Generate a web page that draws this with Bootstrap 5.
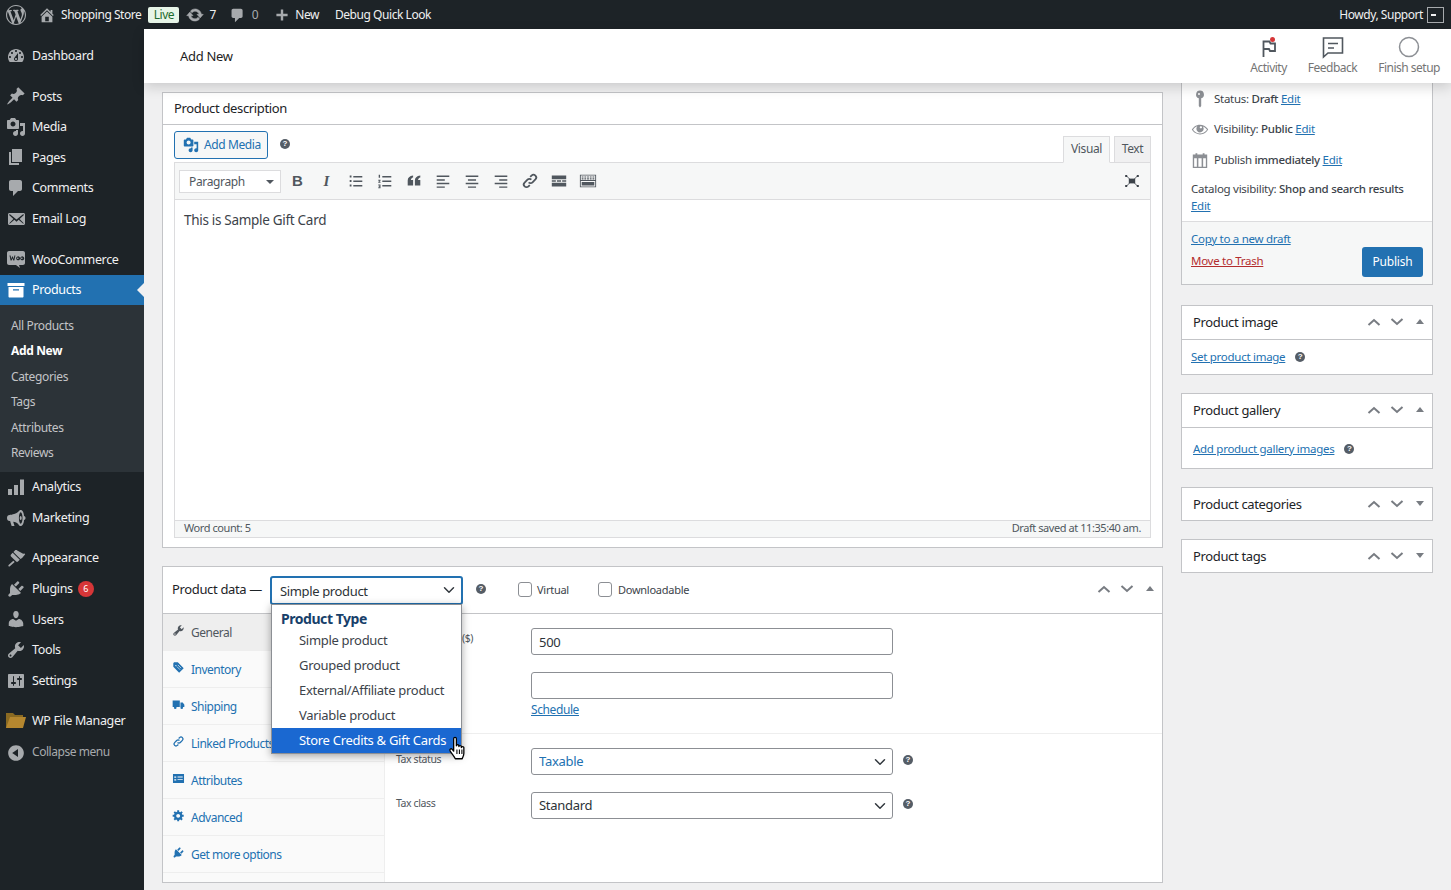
<!DOCTYPE html>
<html lang="en">
<head>
  <meta charset="UTF-8" />
  <meta name="viewport" content="width=device-width, initial-scale=1" />
  <title>Add New Product</title>
  <link href="https://cdn.jsdelivr.net/npm/bootstrap@5.3.3/dist/css/bootstrap.min.css" rel="stylesheet">
  <style>
    html, body { height: 890px; overflow: hidden; }
    body {
      background: #f0f0f1; color: #3c434a;
      font: 13px/1.4 "Noto Sans", sans-serif; letter-spacing: -.35px;
    }
    a { color: #2271b1; }
    svg { fill: currentColor; flex: none; display: block; }
    /* admin bar */
    .wp-bar { height: 29px; background: #1d2327; color: #f0f0f1; padding: 1px 7px 0 6px; white-space: nowrap; font-size: 12px; letter-spacing: -.45px; }
    .wp-bar .dim { color: #a7aaad; }
    .sp5 { margin-left: 5px; }
    .sp6 { margin-left: 6px; }
    .sp7 { margin-left: 7px; }
    .sp12 { margin-left: 12px; }
    .sp13 { margin-left: 13px; }
    .sp16 { margin-left: 16px; }
    .live-tag { background: #e7f5e8; color: #1d6b2c; border-radius: 2px; height: 16px; width: 31px; line-height: 15px; text-align: center; font-size: 12px; margin-top: -1px; }
    .avatar-box { width: 17px; height: 16px; border: 1px solid #a7aaad; background: #1d2327; padding: 6px 3px; margin-top: -1px; }
    .avatar-box i { display: block; height: 2px; width: 5px; background: #f0f0f1; }
    /* side menu */
    .page-wrap { height: 861px; }
    .side-menu { width: 144px; background: #1d2327; color: #f0f0f1; padding-top: 11.4px; font-size: 12.5px; }
    .menu-row { height: 30.6px; padding-left: 6px; gap: 6px; color: #f0f0f1; text-decoration: none; position: relative; }
    .menu-row svg { color: #a7aaad; }
    .menu-row.gap-top { margin-top: 10px; }
    .menu-row.current { background: #2271b1; color: #fff; }
    .menu-row.current svg { color: #fff; }
    .menu-row.current::after {
      content: ""; position: absolute; right: 0; top: 8px;
      border: 7.5px solid transparent; border-right-color: #f0f0f1; border-left: 0;
    }
    .sub-menu { background: #2c3338; padding: 7.5px 0 6.1px 11px; }
    .sub-menu a { display: block; height: 25.5px; line-height: 25.5px; font-size: 12px; color: #c3c4c7; text-decoration: none; }
    .sub-menu a.on { color: #fff; font-weight: 700; }
    .count-pill { background: #d63638; color: #fff; font-size: 9px; border-radius: 9px; width: 16px; height: 16px; line-height: 16px; text-align: center; margin-left: -1px; }
    .folder-icon { margin-left: -1px; margin-right: -1px; }
    .collapse-row { color: #a7aaad; font-size: 12px; letter-spacing: -.45px; margin-top: 1px; }
    /* top header */
    .main-area { min-width: 0; position: relative; }
    .wc-header { height: 54px; background: #fff; padding: 0 11px 0 36px; box-shadow: 0 4px 12px rgba(0,0,0,.16); position: relative; z-index: 3; color: #1e1e1e; font-size: 13px; letter-spacing: -.3px; }
    .wc-actions { gap: 21px; }
    .wc-action { font-size: 12px; color: #757575; text-align: center; letter-spacing: -.5px; }
    .wc-action svg { margin: 0 auto 1px; color: #50575e; }
    .wc-action .ring { color: #8c8f94; }
    /* columns */
    .cols { padding: 0 18px; gap: 18px; }
    .col-left { width: 1001px; padding-top: 9px; }
    .col-right { width: 252px; }
    .wp-box { border: 1px solid #c3c4c7; background: #fff; border-radius: 0; color: #3c434a; }
    .wp-box .card-header { background: #fff; border-bottom: 1px solid #c3c4c7; border-radius: 0; }
    .desc-box { height: 456px; margin-bottom: 18px; }
    .desc-box .card-header { height: 32px; padding: 0 11px; line-height: 31px; color: #1d2327; }
    /* editor */
    .editor-wrap { padding: 6px 11px 0; }
    .add-media { height: 28px; width: 94px; border: 1px solid #2271b1; border-radius: 3px; background: #f6f7f7; color: #2271b1; padding: 0 0 0 8px; gap: 5px; font-size: 12px; letter-spacing: -.4px; }
    .help-dot { width: 10px; height: 10px; border-radius: 50%; background: #555d66; color: #fff; font: 700 8px/10px "Liberation Sans", sans-serif; text-align: center; letter-spacing: 0; display: inline-block; flex: none; }
    .add-media + .help-dot { margin: 8px 0 0 12px; }
    .editor-top { height: 31px; }
    .editor-tabs { margin-top: -2px; }
    .editor-tab { height: 27px; border: 1px solid #dcdcde; background: #f0f0f1; font-size: 12px; line-height: 24px; text-align: center; color: #50575e; margin-left: 4px; margin-bottom: -1px; width: 37px; }
    .editor-tab.on { background: #f6f7f7; border-bottom-color: #f6f7f7; position: relative; z-index: 1; width: 47px; }
    .editor-frame { border: 1px solid #dcdcde; }
    .mce-bar { height: 37px; background: #f6f7f7; border-bottom: 1px solid #dcdcde; padding: 0 4px; color: #50575e; }
    .mce-select { width: 102px; height: 23px; border: 1px solid #dcdcde; background: #fff; padding: 2px 6px 0 9px; font-size: 12px; color: #50575e; margin-right: 2px; }
    .caret-down { border: 4px solid transparent; border-top-color: #50575e; border-bottom: 0; }
    .mce-btn { width: 29px; text-align: center; }
    .mce-btn svg { margin: 0 auto; }
    .mce-letter { font: 700 15px/20px "Liberation Sans", sans-serif; letter-spacing: 0; }
    .mce-letter em { font-family: "Liberation Serif", serif; }
    .mce-full { margin: 0 6px 0 auto; color: #3c434a; }
    .mce-body { height: 320px; padding: 11px 9px; font-size: 13.5px; color: #3c434a; letter-spacing: -.3px; }
    .mce-foot { height: 17px; background: #f6f7f7; border-top: 1px solid #dcdcde; padding: 0 9px; font-size: 11px; line-height: 14px; color: #50575e; letter-spacing: -.43px; }
    /* product data */
    .data-box { height: 317px; position: relative; }
    .data-head { height: 47px; border-bottom: 1px solid #c3c4c7; padding: 0 9px 2px; color: #1d2327; }
    .type-select { width: 193px; height: 29px; padding: 2px 8px 0 8px; margin: 2px 0 0 8px; border: 2px solid #2271b1; border-radius: 3px; font-size: 13px; line-height: 1; letter-spacing: -.35px; color: #2c3338; background-size: 12px; background-position: right 6px center; }
    .data-head .help-dot { margin-left: 13px; }
    .data-head .check-lbl { font-size: 11px; color: #3c434a; gap: 5px; letter-spacing: -.25px; margin-top: 2px; }
    .data-head .check-virtual { margin-left: 32px; }
    .data-head .check-down { margin-left: 29px; gap: 6px; }
    .data-head .form-check-input { width: 14px; height: 15px; margin: 0; border-radius: 3px; border-color: #8c8f94; }
    .box-arrows { color: #787c82; margin-right: -8px; }
    .type-menu { position: absolute; left: 108px; top: 37px; width: 191px; border: 1px solid #8c8f94; border-radius: 0; padding: 1px 0 0; margin: 0; z-index: 4; box-shadow: 0 2px 8px rgba(0,0,0,.35); font-size: 13px; color: #3c434a; letter-spacing: -.3px; }
    .type-menu .dropdown-header { padding: 3px 9px 0; font-size: 14px; font-weight: 700; color: #17406a; height: 22px; letter-spacing: -.45px; }
    .type-menu .dropdown-item { padding: 0 0 0 27px; height: 25px; line-height: 24px; color: #3c434a; }
    .type-menu .dropdown-item.active { background: #1a68d1; color: #fff; }
    .hand-cursor { position: absolute; left: 285px; top: 169px; z-index: 5; }
    .data-tabs { width: 222px; background: #fafafa; border-right: 1px solid #eee; }
    .data-tabs a { height: 37px; border-bottom: 1px solid #eee; padding: 2px 9px 0; gap: 6px; color: #2271b1; font-size: 12px; text-decoration: none; letter-spacing: -.5px; white-space: nowrap; overflow: hidden; }
    .data-tabs a.on { background: #eee; color: #50575e; }
    .data-tabs a svg { margin-top: -5px; }
    .data-panel { padding-top: 14px; }
    .data-row { height: 27px; margin-bottom: 17px; padding-left: 11px; }
    .data-row label { width: 135px; font-size: 10.5px; color: #50575e; letter-spacing: -.4px; margin-top: -5px; }
    .data-row label.price-unit { padding-left: 66px; margin-top: -6px; }
    .data-row .form-control, .data-row .form-select { width: 362px; height: 27px; padding: 0 7px; font-size: 13px; letter-spacing: -.3px; border: 1px solid #8c8f94; border-radius: 3px; color: #2c3338; background-size: 12px; background-position: right 6px center; }
    .data-row .form-select { padding-top: 1px; }
    .data-row .form-select.tax-on { color: #2271b1; }
    .data-row .help-dot { margin: -3px 0 0 10px; }
    .sched-link { margin: -14px 0 15px 146px; font-size: 12px; height: 16px; line-height: 16px; letter-spacing: -.4px; }
    .panel-sep { border-top: 1px solid #eee; height: 15px; }
    /* side boxes */
    .publish-box { height: 202px; border-top: 0; margin-bottom: 20px; font-size: 11.5px; letter-spacing: -.28px; }
    .pub-list { padding-top: .5px; height: 92px; }
    .pub-row { height: 30.5px; padding-left: 9px; color: #3c434a; }
    .pub-row svg { color: #8c8f94; margin-right: 5px; }
    .pub-row svg.key-icon { margin: 0 7px 0 2px; }
    .pub-text { padding: 5px 9px 0; line-height: 17px; height: 46px; }
    .pub-foot { height: 63px; background: #f6f7f7; border-top: 1px solid #dcdcde; padding: 6px 9px 0; }
    .pub-foot .del { color: #b32d2e; }
    .pub-foot .stack { line-height: 22px; }
    .publish-btn { width: 61px; height: 30px; background: #2271b1; color: #fff; border: 0; border-radius: 3px; font-size: 12px; padding: 0; letter-spacing: -.2px; margin-top: 19px; }
    .side-box { margin-bottom: 18px; }
    .side-box .card-header { height: 34px; padding: 0 1px 1px 11px; color: #1d2327; }
    .side-box .card-header.only { height: 32px; border-bottom: 0; padding-bottom: 0; }
    .side-box .side-body { height: 34px; padding: 0 9px; font-size: 11.5px; gap: 10px; letter-spacing: -.28px; }
    .side-box .side-body.tall { height: 40px; padding: 2px 11px 0; }
    .box-arrow-btn { width: 23px; color: #787c82; }
    .box-arrow-btn svg { margin: 0 auto; }
  </style>
</head>
<body>
  <svg width="0" height="0" class="position-absolute">
    <symbol id="i-wp" viewBox="0 0 20 20"><path d="M20 10c0-5.51-4.49-10-10-10C4.48 0 0 4.49 0 10c0 5.52 4.48 10 10 10 5.51 0 10-4.48 10-10zM7.78 15.37L4.37 6.22c.55-.02 1.17-.08 1.17-.08.5-.06.44-1.13-.06-1.11 0 0-1.45.11-2.37.11-.18 0-.37 0-.58-.01C4.12 2.69 6.87 1.11 10 1.11c2.33 0 4.45.87 6.05 2.34-.68-.11-1.65.39-1.65 1.58 0 .74.45 1.36.9 2.1.35.61.55 1.36.55 2.46 0 1.49-1.4 5-1.4 5l-3.03-8.37c.54-.02.82-.17.82-.17.5-.05.44-1.25-.06-1.22 0 0-1.44.12-2.38.12-.87 0-2.33-.12-2.33-.12-.5-.03-.56 1.2-.06 1.22l.92.08 1.26 3.41zM17.41 10c.24-.64.74-1.87.43-4.25.7 1.29 1.05 2.71 1.05 4.25 0 3.29-1.73 6.24-4.4 7.78.97-2.59 1.94-5.2 2.92-7.78zM6.1 18.09C3.12 16.65 1.11 13.53 1.11 10c0-1.3.23-2.48.72-3.59C3.25 10.3 4.67 14.2 6.1 18.09zm4.03-6.63l2.58 6.98c-.86.29-1.76.45-2.71.45-.79 0-1.57-.11-2.29-.33.81-2.38 1.62-4.74 2.42-7.1z"/></symbol>
    <symbol id="i-home" viewBox="0 0 20 20"><path d="M16 8.5l1.53 1.53-1.06 1.06L10 4.62l-6.47 6.47-1.06-1.06L10 2.5l4 4v-2h2v4zm-6-2.46l6 5.99V18H4v-5.97zM12 17v-5H8v5h4z"/></symbol>
    <symbol id="i-update" viewBox="0 0 20 20"><path stroke="currentColor" stroke-width=".6" d="M10.2 3.28c3.53 0 6.43 2.61 6.92 6h2.08l-3.5 4-3.5-4h2.32c-.45-1.97-2.21-3.45-4.32-3.45-1.45 0-2.73.71-3.54 1.78L4.95 5.66C6.23 4.2 8.11 3.28 10.2 3.28zm-.4 13.44c-3.52 0-6.43-2.61-6.92-6H.8l3.5-4c1.17 1.33 2.33 2.67 3.5 4H5.48c.45 1.97 2.21 3.45 4.32 3.45 1.45 0 2.73-.71 3.54-1.78l1.71 1.95c-1.28 1.46-3.15 2.38-5.25 2.38z"/></symbol>
    <symbol id="i-comment" viewBox="0 0 20 20"><path d="M5 2h9c1.1 0 2 .9 2 2v7c0 1.1-.9 2-2 2h-2l-5 5v-5H5c-1.1 0-2-.9-2-2V4c0-1.1.9-2 2-2z"/></symbol>
    <symbol id="i-plus" viewBox="0 0 20 20"><path d="M17 8.5v3h-5.500V17h-3v-5.500H3v-3h5.500V3h3v5.500z"/></symbol>
    <symbol id="i-dash" viewBox="0 0 20 20"><path d="M3.76 16h12.48c1.1-1.37 1.76-3.11 1.76-5 0-4.42-3.58-8-8-8s-8 3.58-8 8c0 1.89.66 3.63 1.76 5zM10 4c.55 0 1 .45 1 1s-.45 1-1 1-1-.45-1-1 .45-1 1-1zM6 6c.55 0 1 .45 1 1s-.45 1-1 1-1-.45-1-1 .45-1 1-1zm8 0c.55 0 1 .45 1 1s-.45 1-1 1-1-.45-1-1 .45-1 1-1zm-5.370 5.550L12 7v6c0 1.100-.9 2-2 2s-2-.9-2-2c0-.57.240-1.080.630-1.450zM4 10c.55 0 1 .45 1 1s-.45 1-1 1-1-.45-1-1 .45-1 1-1zm12 0c.55 0 1 .45 1 1s-.45 1-1 1-1-.45-1-1 .45-1 1-1zm-5 3c0-.55-.45-1-1-1s-1 .45-1 1 .45 1 1 1 1-.45 1-1z"/></symbol>
    <symbol id="i-pin" viewBox="0 0 20 20"><path d="M10.44 3.020l1.820-1.820 6.360 6.350-1.830 1.820c-1.050-.68-2.480-.57-3.410.36l-.75.75c-.92.93-1.040 2.350-.35 3.410l-1.830 1.820-2.410-2.410-2.800 2.790c-.42.42-3.380 2.710-3.800 2.290s1.860-3.390 2.280-3.810l2.790-2.790L4.100 9.360l1.830-1.820c1.050.69 2.480.57 3.400-.36l.75-.75c.93-.92 1.050-2.350.36-3.410z"/></symbol>
    <symbol id="i-media" viewBox="0 0 20 20"><path d="M13 11V4c0-.55-.45-1-1-1h-1.670L9 1H5L3.670 3H2c-.55 0-1 .45-1 1v7c0 .55.45 1 1 1h10c.55 0 1-.45 1-1zM7 4.500c1.380 0 2.500 1.120 2.500 2.500S8.380 9.500 7 9.500 4.500 8.380 4.500 7 5.620 4.500 7 4.500zM14 6h5v10.500c0 1.380-1.120 2.500-2.500 2.500S14 17.880 14 16.500s1.120-2.500 2.500-2.500c.17 0 .34.020.5.050V9h-3V6zm-4 8.050V13h2v3.500c0 1.380-1.120 2.500-2.500 2.500S7 17.880 7 16.500 8.120 14 9.500 14c.17 0 .34.020.5.050z"/></symbol>
    <symbol id="i-pages" viewBox="0 0 20 20"><path d="M6 15V2h10v13H6zm-1 1h8v2H3V5h2v11z"/></symbol>
    <symbol id="i-mail" viewBox="0 0 20 20"><path d="M19 14.500v-9c0-.83-.67-1.500-1.500-1.500H3.490c-.83 0-1.500.67-1.500 1.500v9c0 .83.67 1.500 1.500 1.500H17.500c.83 0 1.500-.67 1.500-1.500zm-1.310-9.110c.33.33.15.67-.03.84L13.600 9.950l3.900 4.060c.12.14.2.36.060.51-.13.16-.43.15-.56.050l-4.370-3.730-2.140 1.950-2.130-1.950-4.370 3.730c-.13.1-.43.11-.56-.05-.14-.15-.06-.37.060-.51l3.900-4.060-4.060-3.720c-.18-.17-.36-.51-.03-.84s.67-.17.95.070l6.240 5.040 6.250-5.040c.28-.24.62-.4.95-.07z"/></symbol>
    <symbol id="i-woo" viewBox="0 0 20 20"><path d="M3 2h14c1.100 0 2 .9 2 2v10c0 1.100-.9 2-2 2h-4l1 3-4-3H3c-1.100 0-2-.9-2-2V4c0-1.100.9-2 2-2z"/><path fill="#1d2327" d="M3.500 6.500h1.100l.6 3.400.9-2.400h.8l.8 2.400.7-3.400h1l-1.100 5h-1l-.8-2.300-.9 2.300h-1zM11.500 7.400a2 2 0 1 1 0 3.800 2 2 0 0 1 0-3.800zm.3 1.100a.8.8 0 1 0 .01 1.600.8.8 0 0 0-.01-1.600zM15.600 7.400a2 2 0 1 1 0 3.800 2 2 0 0 1 0-3.800zm.2 1.100a.8.8 0 1 0 .01 1.600.8.8 0 0 0-.01-1.600z"/></symbol>
    <symbol id="i-archive" viewBox="0 0 20 20"><path d="M18.500 3v3h-17V3h17zM2.500 7h15v9.500c0 .55-.45 1-1 1h-13c-.55 0-1-.45-1-1V7zM7 9.300v1.200h6V9.300H7z"/></symbol>
    <symbol id="i-bars" viewBox="0 0 20 20"><path d="M2 12h4v6H2zM8 8h4v10H8zM14 2.500h4V18h-4z"/></symbol>
    <symbol id="i-mega" viewBox="0 0 20 20"><path d="M18 8c0-3.300-1.500-6-3.300-6-.9 0-1.600.6-2.200 1.600C10.600 5.600 6 7 3.500 7 2 7 1 8.200 1 10s1 3 2.500 3l.6.1L5.600 18h2.900l-1.300-4.300c2 .3 3.900 1 5.300 2.700.6 1 1.300 1.600 2.200 1.600C16.500 18 18 15.300 18 12c1-.2 1.500-1 1.500-2S19 8.200 18 8zm-3.300 7.700c-1 0-1.800-2.500-1.800-5.700s.8-5.700 1.800-5.700 1.800 2.500 1.800 5.700-.8 5.700-1.800 5.700zM14.700 8c-.7 0-1 1-1 2s.3 2 1 2 1-1 1-2-.3-2-1-2z"/></symbol>
    <symbol id="i-brush" viewBox="0 0 20 20"><path d="M14.480 11.060L7.410 3.990l1.500-1.500c.5-.56 1.500-.5 2.300-.1l5.900 3.300 1.400-.3.700.8-3.100 3.800zM6.700 4.700l7.070 7.070-1.800 1.800c-.6.5-1.300.5-1.800 0L5 8.400c-.5-.5-.5-1.200 0-1.800zM7.300 12.700l1.400 1.400-4.800 4.100c-.9.800-2.100-.4-1.300-1.300z"/></symbol>
    <symbol id="i-plug" viewBox="0 0 20 20"><path d="M13.110 4.360L9.870 7.600 8 5.730l3.240-3.240c.35-.34 1.050-.2 1.560.32.52.51.66 1.210.31 1.550zm-8 1.770l.91-1.120 9.010 9.010-1.190.84c-.71.71-2.630 1.160-3.820 1.160H6.140L4.900 17.260c-.59.59-1.540.59-2.120 0-.59-.58-.59-1.530 0-2.120l1.240-1.240v-3.880c0-1.130.4-3.190 1.090-3.890zm7.260 3.970l3.240-3.240c.34-.35 1.040-.21 1.550.31.52.51.66 1.210.31 1.550l-3.240 3.250z"/></symbol>
    <symbol id="i-user" viewBox="0 0 20 20"><path d="M10 9.250c-2.270 0-2.730-3.440-2.730-3.440C7 4.020 7.820 2 9.970 2c2.160 0 2.980 2.020 2.710 3.810 0 0-.41 3.440-2.680 3.440zm0 2.570L12.720 10c2.390 0 4.520 2.330 4.520 4.530v2.490s-3.650 1.130-7.240 1.130c-3.650 0-7.240-1.130-7.240-1.130v-2.490c0-2.250 1.940-4.480 4.470-4.480z"/></symbol>
    <symbol id="i-wrench" viewBox="0 0 20 20"><path d="M16.680 9.770c-1.340 1.340-3.300 1.670-4.950.99l-5.410 6.520c-.99.99-2.590.99-3.580 0s-.99-2.590 0-3.570l6.520-5.420c-.68-1.650-.35-3.610.99-4.950 1.280-1.280 3.120-1.620 4.720-1.060l-2.890 2.890 2.820 2.820 2.860-2.870c.53 1.580.18 3.390-1.080 4.650zM3.810 16.210c.4.39 1.040.39 1.430 0 .4-.4.4-1.040 0-1.430-.39-.4-1.030-.4-1.430 0-.39.39-.39 1.030 0 1.430z"/></symbol>
    <symbol id="i-sliders" viewBox="0 0 20 20"><path d="M18 16V4c0-.55-.45-1-1-1H3c-.55 0-1 .45-1 1v12c0 .55.45 1 1 1h14c.55 0 1-.45 1-1zM8 11h1c.55 0 1 .45 1 1s-.45 1-1 1H8v1.500c0 .28-.22.5-.5.5s-.5-.22-.5-.5V13H6c-.55 0-1-.45-1-1s.45-1 1-1h1V5.500c0-.28.22-.5.5-.5s.5.22.5.5V11zm5-2h-1c-.55 0-1-.45-1-1s.45-1 1-1h1V5.500c0-.28.22-.5.5-.5s.5.22.5.5V7h1c.55 0 1 .45 1 1s-.45 1-1 1h-1v5.500c0 .28-.22.5-.5.5s-.5-.22-.5-.5V9z"/></symbol>
    <symbol id="i-collapse" viewBox="0 0 20 20"><path d="M10 2.160c4.330 0 7.840 3.510 7.840 7.840s-3.510 7.840-7.840 7.840S2.160 14.330 2.160 10 5.710 2.160 10 2.160zm2 11.720V6.120L6.180 9.970z"/></symbol>
    <symbol id="i-up" viewBox="0 0 16 16"><path fill="none" stroke="currentColor" stroke-width="2" d="M2.500 11l5.500-5 5.500 5"/></symbol>
    <symbol id="i-down" viewBox="0 0 16 16"><path fill="none" stroke="currentColor" stroke-width="2" d="M2.500 5l5.500 5 5.500-5"/></symbol>
    <symbol id="i-tri-up" viewBox="0 0 12 16"><path d="M6 5l4 5H2z"/></symbol>
    <symbol id="i-tri-down" viewBox="0 0 12 16"><path d="M6 10L2 5h8z"/></symbol>
    <symbol id="i-link" viewBox="0 0 20 20"><path fill="none" stroke="currentColor" stroke-width="2" d="M8.500 11.500a3 3 0 0 0 4.300 0l3.200-3.200a3 3 0 0 0-4.300-4.300l-1.500 1.500M11.500 8.500a3 3 0 0 0-4.300 0L4 11.700A3 3 0 0 0 8.300 16l1.500-1.500"/></symbol>
    <symbol id="i-tag" viewBox="0 0 20 20"><path d="M9 2l9 9-7 7-9-9V4c0-1.100.9-2 2-2zM6 8a1 1 0 1 0 0-2 1 1 0 0 0 0 2z"/><path fill="none" stroke="#fafafa" d="M9 6l5 5M7.500 8.500l5 5"/></symbol>
    <symbol id="i-truck" viewBox="0 0 20 20"><path d="M1 4h11v10H1zM13 7h3.500l2.500 3.500V14h-6z"/><circle cx="5" cy="15" r="2"/><circle cx="15" cy="15" r="2"/></symbol>
    <symbol id="i-attr" viewBox="0 0 20 20"><path d="M1.500 3h17v14h-17zM3.500 7v2h3V7zm5 0v1.300h8V7zM3.500 11v2h3v-2zm5 0v1.300h8V11z" fill-rule="evenodd"/></symbol>
    <symbol id="i-gear" viewBox="0 0 20 20"><path d="M18 12h-2.180c-.17.7-.44 1.350-.81 1.930l1.540 1.540-2.100 2.100-1.540-1.540c-.58.36-1.230.64-1.910.81V19H8v-2.180c-.68-.17-1.330-.45-1.910-.81l-1.540 1.540-2.120-2.120 1.540-1.540c-.36-.58-.64-1.230-.81-1.890H1V9h2.180c.17-.7.44-1.350.81-1.930L2.450 5.530l2.100-2.100 1.540 1.540c.58-.36 1.230-.64 1.910-.81V2h3v2.180c.68.17 1.330.45 1.910.81l1.540-1.540 2.120 2.120-1.540 1.540c.36.58.64 1.230.81 1.890H18v3zm-8.500 1.500c1.660 0 3-1.340 3-3s-1.340-3-3-3-3 1.340-3 3 1.340 3 3 3z"/></symbol>
    <symbol id="i-key" viewBox="0 0 14 18"><path d="M7 .5a4 4 0 0 1 1.200 7.800V16L7 17.500 5.800 16V8.300A4 4 0 0 1 7 .5zm-1 2.500a1 1 0 1 0 0 2 1 1 0 0 0 0-2z" fill-rule="evenodd"/></symbol>
    <symbol id="i-eye" viewBox="0 0 20 20"><path d="M18.300 9.500C15 4.900 8.500 3.800 3.900 7.200c-1.200.9-2.200 2.100-3 3.400.2.4.5.8.8 1.200 3.300 4.600 9.600 5.600 14.200 2.400.9-.7 1.700-1.400 2.400-2.400.3-.4.5-.8.8-1.200-.3-.4-.5-.8-.8-1.100zm-8.200-2.300c.5-.5 1.300-.5 1.800 0s.5 1.300 0 1.800-1.300.5-1.800 0c-.5-.4-.5-1.300 0-1.800zm-.1 7.700c-3.100 0-6-1.600-7.700-4.200C3.500 9 5.100 7.800 7 7c-.7.8-1 1.700-1 2.700 0 2.200 1.700 4.100 4 4.100 2.200 0 4.100-1.700 4.100-4 0-1-.4-2-1-2.700 1.900.8 3.500 2 4.700 3.700-1.800 2.600-4.700 4.200-7.800 4.200z"/></symbol>
    <symbol id="i-cal" viewBox="0 0 20 20"><path fill-rule="evenodd" d="M15 4h3v15H2V4h3V2.500h2V4h6V2.500h2zM3.500 8v9.500h3V8zm4.700 0v9.500h3.600V8zm5.300 0v9.500h3V8z"/></symbol>
    <symbol id="i-ul" viewBox="0 0 20 20"><path d="M3 4h2v2H3zM7 4.500h10V6H7zM3 9h2v2H3zM7 9.500h10V11H7zM3 14h2v2H3zM7 14.500h10V16H7z"/></symbol>
    <symbol id="i-ol" viewBox="0 0 20 20"><path d="M3 3h1.500v3.500H3zM2.500 8.500h2.500v1.200l-1.300 1H5V12H2.500v-1l1.300-1.200H2.500zM2.500 14H5v4H2.500v-1h1.300v-.5H3V15.500h.8V15H2.500zM7 4.500h10V6H7zM7 9.500h10V11H7zM7 14.500h10V16H7z"/></symbol>
    <symbol id="i-quote" viewBox="0 0 20 20"><path d="M9 4v2c-1.500.4-2.400 1.400-2.500 3H9v6H3v-5.500C3 6.500 5 4.500 9 4zM17 4v2c-1.500.4-2.400 1.400-2.500 3H17v6h-6V9.500c0-3 2-5 6-5.500z"/></symbol>
    <symbol id="i-al" viewBox="0 0 20 20"><path d="M3 4h14v1.600H3zM3 8h9v1.600H3zM3 12h14v1.600H3zM3 16h9v1.600H3z"/></symbol>
    <symbol id="i-ac" viewBox="0 0 20 20"><path d="M3 4h14v1.600H3zM5.500 8h9v1.600h-9zM3 12h14v1.600H3zM5.500 16h9v1.600h-9z"/></symbol>
    <symbol id="i-ar" viewBox="0 0 20 20"><path d="M3 4h14v1.600H3zM8 8h9v1.600H8zM3 12h14v1.600H3zM8 16h9v1.600H8z"/></symbol>
    <symbol id="i-more" viewBox="0 0 20 20"><path d="M2 4h16v4H2zM2 9.200h4.500v1.600H2zM7.700 9.200h4.600v1.600H7.700zM13.500 9.200H18v1.600h-4.500zM2 12h16v4H2z"/></symbol>
    <symbol id="i-kb" viewBox="0 0 20 20"><path fill-rule="evenodd" d="M1 3h18v14H1zm1 1v5h16V4zm0 6v6h16v-6zM3 5h2v1.200H3zm3 0h2v1.200H6zm3 0h2v1.200H9zm3 0h2v1.200h-2zm3 0h2v1.200h-2zM3 7h2v1.200H3zm3 0h2v1.200H6zm3 0h2v1.200H9zm3 0h2v1.200h-2zm3 0h2v1.200h-2zM3 11h14v4H3z"/></symbol>
    <symbol id="i-full" viewBox="0 0 20 20"><path d="M6 7h8v6H6z"/><path fill="none" stroke="currentColor" d="M3 3.500l5 5M17 3.500l-5 5M3 16.500l5-5M17 16.500l-5-5"/><path d="M1.500 2.500h2.500V5H1.500zM16 2.500h2.500V5H16zM1.500 15H4v2.500H1.500zM16 15h2.500v2.500H16z"/></symbol>
  </svg>

  <!-- Admin bar -->
  <div class="wp-bar d-flex align-items-center">
    <svg width="20" height="20" class="dim"><use href="#i-wp"/></svg>
    <svg width="18" height="18" class="dim sp12"><use href="#i-home"/></svg>
    <span class="sp5">Shopping Store</span>
    <span class="live-tag sp7">Live</span>
    <svg width="18" height="18" class="dim sp7"><use href="#i-update"/></svg>
    <span class="sp5">7</span>
    <svg width="17" height="17" class="dim sp13"><use href="#i-comment"/></svg>
    <span class="dim sp6">0</span>
    <svg width="16" height="16" class="dim sp16"><use href="#i-plus"/></svg>
    <span class="sp5">New</span>
    <span class="sp16">Debug Quick Look</span>
    <span class="ms-auto">Howdy, Support</span>
    <span class="avatar-box ms-1"><i></i></span>
  </div>

  <div class="page-wrap d-flex">
    <!-- Side menu -->
    <nav class="side-menu flex-shrink-0">
      <a class="menu-row d-flex align-items-center" href="#"><svg width="20" height="20"><use href="#i-dash"/></svg>Dashboard</a>
      <a class="menu-row gap-top d-flex align-items-center" href="#"><svg width="20" height="20"><use href="#i-pin"/></svg>Posts</a>
      <a class="menu-row d-flex align-items-center" href="#"><svg width="20" height="20"><use href="#i-media"/></svg>Media</a>
      <a class="menu-row d-flex align-items-center" href="#"><svg width="20" height="20"><use href="#i-pages"/></svg>Pages</a>
      <a class="menu-row d-flex align-items-center" href="#"><svg width="20" height="20"><use href="#i-comment"/></svg>Comments</a>
      <a class="menu-row d-flex align-items-center" href="#"><svg width="20" height="20"><use href="#i-mail"/></svg>Email Log</a>
      <a class="menu-row gap-top d-flex align-items-center" href="#"><svg width="20" height="20"><use href="#i-woo"/></svg>WooCommerce</a>
      <a class="menu-row current d-flex align-items-center" href="#"><svg width="20" height="20"><use href="#i-archive"/></svg>Products</a>
      <div class="sub-menu">
        <a href="#">All Products</a>
        <a href="#" class="on">Add New</a>
        <a href="#">Categories</a>
        <a href="#">Tags</a>
        <a href="#">Attributes</a>
        <a href="#">Reviews</a>
      </div>
      <a class="menu-row d-flex align-items-center" href="#"><svg width="20" height="20"><use href="#i-bars"/></svg>Analytics</a>
      <a class="menu-row d-flex align-items-center" href="#"><svg width="20" height="20"><use href="#i-mega"/></svg>Marketing</a>
      <a class="menu-row gap-top d-flex align-items-center" href="#"><svg width="20" height="20"><use href="#i-brush"/></svg>Appearance</a>
      <a class="menu-row d-flex align-items-center" href="#"><svg width="20" height="20"><use href="#i-plug"/></svg>Plugins<span class="count-pill">6</span></a>
      <a class="menu-row d-flex align-items-center" href="#"><svg width="20" height="20"><use href="#i-user"/></svg>Users</a>
      <a class="menu-row d-flex align-items-center" href="#"><svg width="20" height="20"><use href="#i-wrench"/></svg>Tools</a>
      <a class="menu-row d-flex align-items-center" href="#"><svg width="20" height="20"><use href="#i-sliders"/></svg>Settings</a>
      <a class="menu-row gap-top d-flex align-items-center" href="#"><svg width="22" height="18" viewBox="0 0 22 18" class="folder-icon"><path fill="#8a6a22" d="M1 1h7l2 2h8v13H1z"/><path fill="#b5872f" d="M5 5h16l-3 11H1z"/></svg>WP File Manager</a>
      <a class="menu-row collapse-row d-flex align-items-center" href="#"><svg width="20" height="20"><use href="#i-collapse"/></svg>Collapse menu</a>
    </nav>

    <div class="main-area flex-grow-1">
      <div class="wc-header d-flex align-items-center">
        <span>Add New</span>
        <div class="wc-actions ms-auto d-flex">
          <div class="wc-action">
            <svg width="24" height="24" viewBox="0 0 24 24"><path fill="none" stroke="currentColor" stroke-width="1.800" d="M6.500 22V6.500h6l1 2H18v7.500h-5l-1-2H6.500"/><circle cx="15.500" cy="4.500" r="2.500" fill="#d63638"/></svg>
            Activity
          </div>
          <div class="wc-action">
            <svg width="24" height="24" viewBox="0 0 24 24"><path fill="none" stroke="currentColor" stroke-width="1.600" d="M2.500 3h19v15H7L2.500 22zM7 8.500h10M7 13h6"/></svg>
            Feedback
          </div>
          <div class="wc-action">
            <svg width="24" height="24" viewBox="0 0 24 24" class="ring"><circle cx="12" cy="12" r="9.500" fill="none" stroke="currentColor" stroke-width="1.500"/></svg>
            Finish setup
          </div>
        </div>
      </div>

      <div class="cols d-flex">
        <div class="col-left">
          <!-- Description -->
          <div class="card wp-box desc-box">
            <div class="card-header">Product description</div>
            <div class="editor-wrap">
              <div class="editor-top d-flex">
                <button type="button" class="btn add-media d-flex align-items-center"><svg width="16" height="16"><use href="#i-media"/></svg>Add Media</button>
                <span class="help-dot">?</span>
                <div class="editor-tabs ms-auto d-flex align-items-end">
                  <div class="editor-tab on">Visual</div>
                  <div class="editor-tab">Text</div>
                </div>
              </div>
              <div class="editor-frame">
                <div class="mce-bar d-flex align-items-center">
                  <div class="mce-select d-flex align-items-center justify-content-between"><span>Paragraph</span><span class="caret-down"></span></div>
                  <div class="mce-btn mce-letter">B</div>
                  <div class="mce-btn mce-letter"><em>I</em></div>
                  <div class="mce-btn"><svg width="18" height="18"><use href="#i-ul"/></svg></div>
                  <div class="mce-btn"><svg width="18" height="18"><use href="#i-ol"/></svg></div>
                  <div class="mce-btn"><svg width="18" height="18"><use href="#i-quote"/></svg></div>
                  <div class="mce-btn"><svg width="18" height="18"><use href="#i-al"/></svg></div>
                  <div class="mce-btn"><svg width="18" height="18"><use href="#i-ac"/></svg></div>
                  <div class="mce-btn"><svg width="18" height="18"><use href="#i-ar"/></svg></div>
                  <div class="mce-btn"><svg width="18" height="18"><use href="#i-link"/></svg></div>
                  <div class="mce-btn"><svg width="18" height="18"><use href="#i-more"/></svg></div>
                  <div class="mce-btn"><svg width="18" height="18"><use href="#i-kb"/></svg></div>
                  <svg width="16" height="16" class="mce-full"><use href="#i-full"/></svg>
                </div>
                <div class="mce-body">This is Sample Gift Card</div>
                <div class="mce-foot d-flex justify-content-between"><span>Word count: 5</span><span>Draft saved at 11:35:40 am.</span></div>
              </div>
            </div>
          </div>

          <!-- Product data -->
          <div class="card wp-box data-box">
            <div class="data-head d-flex align-items-center">
              <span>Product data —</span>
              <select class="form-select type-select"><option>Simple product</option></select>
              <span class="help-dot">?</span>
              <label class="check-lbl check-virtual d-flex align-items-center"><input class="form-check-input" type="checkbox">Virtual</label>
              <label class="check-lbl check-down d-flex align-items-center"><input class="form-check-input" type="checkbox">Downloadable</label>
              <div class="ms-auto d-flex box-arrows">
                <div class="box-arrow-btn"><svg width="16" height="16"><use href="#i-up"/></svg></div>
                <div class="box-arrow-btn"><svg width="16" height="16"><use href="#i-down"/></svg></div>
                <div class="box-arrow-btn"><svg width="12" height="16"><use href="#i-tri-up"/></svg></div>
              </div>
            </div>

            <div class="dropdown-menu show type-menu">
              <div class="dropdown-header">Product Type</div>
              <a class="dropdown-item" href="#">Simple product</a>
              <a class="dropdown-item" href="#">Grouped product</a>
              <a class="dropdown-item" href="#">External/Affiliate product</a>
              <a class="dropdown-item" href="#">Variable product</a>
              <a class="dropdown-item active" href="#">Store Credits &amp; Gift Cards</a>
            </div>
            <svg class="hand-cursor" width="20" height="26" viewBox="0 0 18 24"><path fill="#fff" stroke="#000" stroke-width="1.200" stroke-linejoin="round" d="M5 2.500c0-1.600 2.500-1.600 2.500 0V9c0-1.300 2.300-1.300 2.300 0v.8c0-1.300 2.300-1.300 2.300 0v.9c0-1.200 2.300-1.200 2.300 0V16c0 2-1 3.500-1.500 5H6.500C5.500 19 3.800 17 1.800 14c-1-1.600.8-2.900 1.900-1.700L5 14z"/><path stroke="#000" d="M8 12.500v4M10.300 12.500v4M12.600 12.500v4" fill="none"/></svg>

            <div class="d-flex flex-grow-1">
              <div class="data-tabs nav flex-column flex-nowrap">
                <a class="on d-flex align-items-center" href="#"><svg width="13" height="13"><use href="#i-wrench"/></svg>General</a>
                <a class="d-flex align-items-center" href="#"><svg width="13" height="13"><use href="#i-tag"/></svg>Inventory</a>
                <a class="d-flex align-items-center" href="#"><svg width="13" height="13"><use href="#i-truck"/></svg>Shipping</a>
                <a class="d-flex align-items-center" href="#"><svg width="13" height="13"><use href="#i-link"/></svg>Linked Products</a>
                <a class="d-flex align-items-center" href="#"><svg width="13" height="13"><use href="#i-attr"/></svg>Attributes</a>
                <a class="d-flex align-items-center" href="#"><svg width="13" height="13"><use href="#i-gear"/></svg>Advanced</a>
                <a class="d-flex align-items-center" href="#"><svg width="13" height="13"><use href="#i-plug"/></svg>Get more options</a>
              </div>
              <div class="data-panel flex-grow-1">
                <div class="data-row d-flex align-items-center">
                  <label class="price-unit">($)</label>
                  <input class="form-control" type="text" value="500" aria-label="Regular price">
                </div>
                <div class="data-row d-flex align-items-center">
                  <label></label>
                  <input class="form-control" type="text" aria-label="Sale price">
                </div>
                <div class="sched-link"><a href="#">Schedule</a></div>
                <div class="panel-sep"></div>
                <div class="data-row d-flex align-items-center">
                  <label>Tax status</label>
                  <select class="form-select tax-on"><option>Taxable</option></select>
                  <span class="help-dot">?</span>
                </div>
                <div class="data-row d-flex align-items-center">
                  <label>Tax class</label>
                  <select class="form-select"><option>Standard</option></select>
                  <span class="help-dot">?</span>
                </div>
              </div>
            </div>
          </div>
        </div>

        <div class="col-right">
          <!-- Publish -->
          <div class="card wp-box publish-box">
            <div class="pub-list">
              <div class="pub-row d-flex align-items-center"><svg width="14" height="18" class="key-icon"><use href="#i-key"/></svg><span>Status: <b class="fw-medium">Draft</b> <a href="#">Edit</a></span></div>
              <div class="pub-row d-flex align-items-center"><svg width="18" height="18"><use href="#i-eye"/></svg><span>Visibility: <b class="fw-medium">Public</b> <a href="#">Edit</a></span></div>
              <div class="pub-row d-flex align-items-center"><svg width="18" height="18"><use href="#i-cal"/></svg><span>Publish <b class="fw-medium">immediately</b> <a href="#">Edit</a></span></div>
            </div>
            <div class="pub-text">Catalog visibility: <b class="fw-medium">Shop and search results</b><br><a href="#">Edit</a></div>
            <div class="pub-foot d-flex align-items-start justify-content-between">
              <div class="stack"><a href="#">Copy to a new draft</a><br><a href="#" class="del">Move to Trash</a></div>
              <button type="button" class="btn publish-btn">Publish</button>
            </div>
          </div>

          <div class="card wp-box side-box">
            <div class="card-header d-flex align-items-center">
              <span class="me-auto">Product image</span>
              <div class="box-arrow-btn"><svg width="16" height="16"><use href="#i-up"/></svg></div>
              <div class="box-arrow-btn"><svg width="16" height="16"><use href="#i-down"/></svg></div>
              <div class="box-arrow-btn"><svg width="12" height="16"><use href="#i-tri-up"/></svg></div>
            </div>
            <div class="side-body d-flex align-items-center"><a href="#">Set product image</a><span class="help-dot">?</span></div>
          </div>

          <div class="card wp-box side-box">
            <div class="card-header d-flex align-items-center">
              <span class="me-auto">Product gallery</span>
              <div class="box-arrow-btn"><svg width="16" height="16"><use href="#i-up"/></svg></div>
              <div class="box-arrow-btn"><svg width="16" height="16"><use href="#i-down"/></svg></div>
              <div class="box-arrow-btn"><svg width="12" height="16"><use href="#i-tri-up"/></svg></div>
            </div>
            <div class="side-body tall d-flex align-items-center"><a href="#">Add product gallery images</a><span class="help-dot">?</span></div>
          </div>

          <div class="card wp-box side-box">
            <div class="card-header only d-flex align-items-center">
              <span class="me-auto">Product categories</span>
              <div class="box-arrow-btn"><svg width="16" height="16"><use href="#i-up"/></svg></div>
              <div class="box-arrow-btn"><svg width="16" height="16"><use href="#i-down"/></svg></div>
              <div class="box-arrow-btn"><svg width="12" height="16"><use href="#i-tri-down"/></svg></div>
            </div>
          </div>

          <div class="card wp-box side-box">
            <div class="card-header only d-flex align-items-center">
              <span class="me-auto">Product tags</span>
              <div class="box-arrow-btn"><svg width="16" height="16"><use href="#i-up"/></svg></div>
              <div class="box-arrow-btn"><svg width="16" height="16"><use href="#i-down"/></svg></div>
              <div class="box-arrow-btn"><svg width="12" height="16"><use href="#i-tri-down"/></svg></div>
            </div>
          </div>
        </div>
      </div>
    </div>
  </div>

  <script src="https://cdn.jsdelivr.net/npm/bootstrap@5.3.3/dist/js/bootstrap.bundle.min.js"></script>
</body>
</html>
